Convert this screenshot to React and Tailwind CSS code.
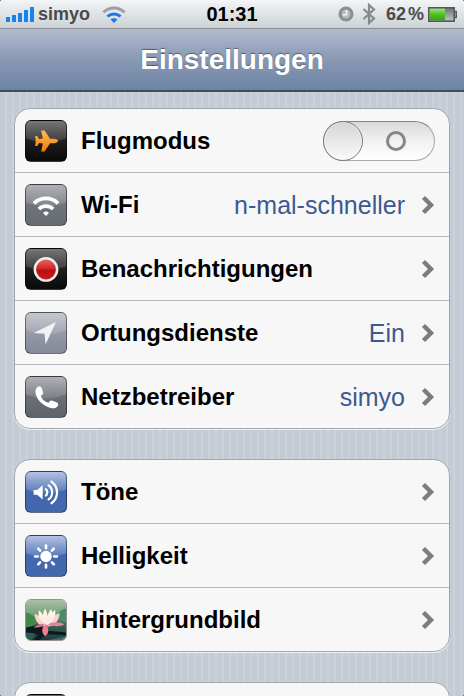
import React, { useState } from 'react';

const PlaneIcon = () => (
  <svg viewBox="0 0 42 42" className="size-full" aria-hidden="true">
    <defs>
      <linearGradient id="plane" x1="0" y1="0" x2="0" y2="1">
        <stop offset="0" stopColor="#ffbe55" />
        <stop offset="1" stopColor="#f5780c" />
      </linearGradient>
    </defs>
    <path
      fill="url(#plane)"
      d="M33.500 21c0 1.300-2 2.300-4 2.300h-4.200L19.500 32h-3.600l1.800-8.400-4-.4-1.900 3.100H9.600L10.200 21l-.6-5.300h2.200l1.900 3.100 4-.4L15.900 10h3.600l5.800 8.700h4.200c2 0 4 1 4 2.300z"
    />
  </svg>
);

const WifiIcon = () => (
  <svg viewBox="0 0 42 42" className="size-full" fill="none" stroke="#fff" strokeWidth="4" aria-hidden="true">
    <path d="M8.300 19.300a18 18 0 0 1 25.400 0" />
    <path d="M13.500 25.200a10.600 10.600 0 0 1 15 0" />
    <path d="M21 32.500l-3.100-3.200a4.500 4.500 0 0 1 6.200 0z" fill="#fff" stroke="none" />
  </svg>
);

const RecordIcon = () => (
  <svg viewBox="0 0 42 42" className="size-full" aria-hidden="true">
    <defs>
      <linearGradient id="record" x1="0" y1="0" x2="0" y2="1">
        <stop offset="0" stopColor="#e4645f" />
        <stop offset="0.450" stopColor="#cf2a28" />
        <stop offset="0.550" stopColor="#bd0f10" />
        <stop offset="1" stopColor="#c81c1c" />
      </linearGradient>
    </defs>
    <circle cx="21" cy="21.500" r="13" fill="#efefef" />
    <circle cx="21" cy="21.500" r="10.400" fill="url(#record)" />
  </svg>
);

const LocationIcon = () => (
  <svg viewBox="0 0 42 42" className="size-full" aria-hidden="true">
    <path d="M31.500 9.500L20.500 33l-1-11.500L8 21z" fill="#f3f3f6" />
  </svg>
);

const PhoneIcon = () => (
  <svg viewBox="0 0 42 42" className="size-full" aria-hidden="true">
    <path
      fill="#fff"
      d="M12.300 10.400c1.800-1.200 3.600-.5 4.300 1.500l1.300 3.800c.5 1.500 0 2.600-1.300 3.300l-1.100.7c1.200 3.600 4.200 6.400 8 7.400l.9-1.100c.9-1.200 2-1.500 3.400-1l4.100 1.400c1.900.7 2.500 2.300 1.400 4-1.300 2-3.600 2.800-6.400 2.300C17.600 30.900 10.300 23.500 9.900 15.600c-.1-2.300.8-4.200 2.400-5.200z"
    />
  </svg>
);

const SoundIcon = () => (
  <svg viewBox="0 0 42 42" className="size-full" fill="none" stroke="#fff" strokeLinecap="round" aria-hidden="true">
    <path d="M8 19h3.700l5.800-5v14.800l-5.800-5H8z" fill="#fff" stroke="none" />
    <path d="M20.800 18a4.500 4.500 0 0 1 0 6.800" strokeWidth="2.300" />
    <path d="M23.700 14a9.200 9.200 0 0 1 0 14.800" strokeWidth="2.300" />
    <path d="M26.700 10a14 14 0 0 1 0 22.800" strokeWidth="2.300" />
  </svg>
);

const SunIcon = () => (
  <svg viewBox="0 0 42 42" className="size-full" stroke="#fff" strokeWidth="2.800" strokeLinecap="round" aria-hidden="true">
    <circle cx="21" cy="21.500" r="6" fill="#fff" stroke="none" />
    <path d="M21 10v2.800M21 30.200v2.800M9.500 21.500h2.800M29.700 21.500h2.800M12.900 13.400l1.900 1.900M27.200 27.700l1.900 1.900M29.100 13.400l-1.900 1.900M14.800 27.700l-1.900 1.900" />
  </svg>
);

const LotusIcon = () => (
  <svg viewBox="0 0 42 42" className="size-full" aria-hidden="true">
    <defs>
      <linearGradient id="pond" x1="0" y1="0" x2="0" y2="1">
        <stop offset="0" stopColor="#a9bfa6" />
        <stop offset="0.300" stopColor="#7ca781" />
        <stop offset="0.600" stopColor="#376a50" />
        <stop offset="1" stopColor="#1e3a3c" />
      </linearGradient>
      <linearGradient id="petal" x1="0" y1="0" x2="0" y2="1">
        <stop offset="0" stopColor="#fffbee" />
        <stop offset="0.600" stopColor="#fdebe2" />
        <stop offset="1" stopColor="#f08e9c" />
      </linearGradient>
    </defs>
    <rect width="42" height="42" fill="url(#pond)" />
    <path d="M0 13c5 1 9 5 13 11L0 31z" fill="#3f8a4b" />
    <path d="M42 9c-5 1-9 5-12 10l12 5z" fill="#4d8a6b" />
    <path d="M0 29l14-3 7 6 21 2v3l-20-1-8 6H8l5-6-13 2z" fill="#0c1a20" />
    <path d="M24 42l18-4v4z" fill="#3f6a73" />
    <path d="M0 34l10 1-4 7H0z" fill="#2b5a50" />
    <path d="M21 28C13 28 9 21 9 14.500c5 1 9 6 12 13.500zM22 28c8 0 13-7 13.500-14-6 1-10 7-13.500 14z" fill="#fad0cf" />
    <path d="M21 28c-6-4-9-11-7.500-17 4 2 7 9 7.500 17zM23 28c6-4 9-12 7.500-17.500-4 2-7 9.500-7.500 17.500z" fill="url(#petal)" />
    <path d="M21 28c-4-6-4-14-1-19 3 5 4 13 1 19zM23 28c-2-6-1-14 3.500-18.500 2 5 1 13-3.500 18.500z" fill="url(#petal)" />
    <path d="M14 18q8 3 16 0l-5 8h-6z" fill="#fdebe2" />
    <path d="M23 25.500c5-3 13-3 17.500 0-3 2.500-12 3-17.500 0z" fill="#e3849a" />
    <path d="M20 25c-4 0-8 1-12 3.500 5 1 9 0 12-3.500z" fill="#e26c83" />
    <path d="M20.500 25.500c-4.500 4-4.500 9-.5 12.500 4.500-3 4.500-8 .5-12.500z" fill="#f27c90" />
  </svg>
);

const groups = [
  {
    id: 'network',
    items: [
      { label: 'Flugmodus', Icon: PlaneIcon, tile: 'from-[#606060] via-[#1f1f1f] to-[#0a0a0a]', toggle: true },
      { label: 'Wi-Fi', Icon: WifiIcon, tile: 'from-[#a3a5a9] via-[#70747b] to-[#666a71]', value: 'n-mal-schneller' },
      { label: 'Benachrichtigungen', Icon: RecordIcon, tile: 'from-[#606060] via-[#1f1f1f] to-[#0a0a0a]' },
      { label: 'Ortungsdienste', Icon: LocationIcon, tile: 'from-[#bdbfc8] via-[#9699a7] to-[#858998]', value: 'Ein' },
      { label: 'Netzbetreiber', Icon: PhoneIcon, tile: 'from-[#a3a5a9] via-[#6b6f76] to-[#5e6269]', value: 'simyo' },
    ],
  },
  {
    id: 'device',
    items: [
      { label: 'Töne', Icon: SoundIcon, tile: 'from-[#a6b8dd] via-[#4167ae] to-[#4468ac]' },
      { label: 'Helligkeit', Icon: SunIcon, tile: 'from-[#a6b8dd] via-[#4167ae] to-[#4468ac]' },
      { label: 'Hintergrundbild', Icon: LotusIcon, photo: true },
    ],
  },
];

const Tile = ({ Icon, tile, photo }) => (
  <span
    className={`relative block size-[42px] shrink-0 overflow-hidden rounded-md border border-black/40 ${
      photo ? '' : `bg-linear-to-b ${tile}`
    }`}
  >
    {!photo && (
      <svg viewBox="0 0 42 42" className="absolute inset-0 size-full" aria-hidden="true">
        <path d="M0 0h42v18q-21 9-42 0z" fill="#fff" fillOpacity="0.140" />
      </svg>
    )}
    <span className="absolute inset-0">
      <Icon />
    </span>
  </span>
);

const Chevron = () => (
  <svg viewBox="0 0 14 20" className="h-5 w-3.5 shrink-0" fill="none" stroke="#7c7c7c" strokeWidth="4.400" aria-hidden="true">
    <path d="M2.500 2.500L10 10l-7.500 7.500" />
  </svg>
);

const Toggle = ({ id }) => {
  const [on, setOn] = useState(false);

  return (
    <span className="relative block h-10 w-28 shrink-0 rounded-full border border-[#a9a9a9] border-t-[#858585] bg-linear-to-b from-[#d9d9d9] via-[#f1f1f1] to-white">
      <input
        id={id}
        type="checkbox"
        role="switch"
        checked={on}
        onChange={(e) => setOn(e.target.checked)}
        className="absolute inset-0 z-10 size-full cursor-pointer appearance-none rounded-full"
      />
      <span
        className={`absolute -top-px size-10 rounded-full border border-[#7d7d7d] bg-linear-to-b from-[#d4d4d4] to-[#fbfbfb] inset-shadow-[0_0_2px_#fff] ${
          on ? '-right-px' : '-left-px'
        }`}
      />
      <span className={`absolute top-[9px] size-5 rounded-full border-3 border-[#868686] ${on ? 'left-7' : 'right-7'}`} />
    </span>
  );
};

const rowClass = 'flex h-[63px] w-full items-center pr-3.5 pl-2.5 text-left';

const Row = ({ item }) => {
  const { label, value, toggle } = item;

  if (toggle) {
    return (
      <div className={rowClass}>
        <Tile {...item} />
        <label htmlFor="airplane" className="ml-3.5 flex-1 text-2xl font-bold text-black">
          {label}
        </label>
        <Toggle id="airplane" />
      </div>
    );
  }

  return (
    <button type="button" className={rowClass}>
      <Tile {...item} />
      <span className="ml-3.5 flex-1 text-2xl font-bold whitespace-nowrap text-black">{label}</span>
      {value && <span className="mr-4 text-[25px] leading-8 whitespace-nowrap text-[#3c5a92]">{value}</span>}
      <Chevron />
    </button>
  );
};

const cardClass =
  'overflow-hidden rounded-2xl border border-[#a2a7ae] bg-[#f7f7f7] shadow-[0_1px_0_#eef1f5]';

const StatusBar = () => (
  <div className="flex h-7 shrink-0 items-center justify-between bg-linear-to-b from-[#f3f5f6] to-[#ccd2d6] px-1.5 text-lg font-bold text-[#4a4a4a]">
    <div className="flex flex-1 items-center">
      <svg viewBox="0 0 28 15" className="mr-1 h-[15px] w-7" fill="#1683f2" aria-hidden="true">
        <path d="M0 10h4v5H0zM6 8h4v7H6zM12 6h4v9h-4zM18 3h4v12h-4zM24 0h4v15h-4z" />
      </svg>
      <span>simyo</span>
      <svg viewBox="0 0 24 17" className="ml-3 h-[17px] w-6" fill="none" strokeWidth="3" aria-hidden="true">
        <path d="M1.500 6.200a15 15 0 0 1 21 0" stroke="#9a9fa3" />
        <path d="M5.500 10.500a9.400 9.400 0 0 1 13 0" stroke="#1978ee" />
        <path d="M12 17l-3.500-3.400a5 5 0 0 1 7 0z" fill="#1978ee" />
      </svg>
    </div>
    <span className="text-xl text-black">01:31</span>
    <div className="flex flex-1 items-center justify-end">
      <svg viewBox="0 0 16 16" className="size-4" aria-hidden="true">
        <circle cx="8" cy="8" r="7.500" fill="#87908e" />
        <circle cx="8" cy="8" r="4.500" fill="#b4bbba" />
        <path d="M8.500 4v4.700H5" fill="none" stroke="#f4f6f6" strokeWidth="1.600" />
      </svg>
      <svg viewBox="0 0 14 22" className="ml-2 h-[22px] w-3.5" fill="none" stroke="#858a8c" strokeWidth="2.200" aria-hidden="true">
        <path d="M1.500 6l10.500 9.500L7 20V2l5 4.500L1.500 16" />
      </svg>
      <span className="ml-2.5 flex gap-0.5">
        <span>62</span>
        <span>%</span>
      </span>
      <svg viewBox="0 0 30 15" className="ml-1 h-[15px] w-[30px]" aria-hidden="true">
        <defs>
          <linearGradient id="charge" x1="0" y1="0" x2="0" y2="1">
            <stop offset="0" stopColor="#9ae37a" />
            <stop offset="0.500" stopColor="#4fc220" />
            <stop offset="1" stopColor="#3f9c1a" />
          </linearGradient>
          <linearGradient id="drained" x1="0" y1="0" x2="0" y2="1">
            <stop offset="0" stopColor="#6f7073" />
            <stop offset="1" stopColor="#c3c5c8" />
          </linearGradient>
        </defs>
        <rect x="0.800" y="0.800" width="25.400" height="13.400" fill="url(#drained)" stroke="#55595c" strokeWidth="1.600" />
        <rect x="1.600" y="1.600" width="15.400" height="11.800" fill="url(#charge)" />
        <path d="M27 4.500h1.200v6H27" fill="none" stroke="#55595c" strokeWidth="1.600" />
      </svg>
    </div>
  </div>
);

const App = () => {
  return (
    <div className="h-screen bg-black font-['Liberation_Sans',Arial,sans-serif]">
      <div className="flex h-full flex-col overflow-hidden rounded-xs bg-[#c5ccd4]">
        <StatusBar />
        <header className="flex h-16 shrink-0 items-center justify-center border-t border-b-2 border-t-[#8b8f95] border-b-[#3f4d66] bg-linear-to-b from-[#b3bccd] via-[#8899b3] to-[#6d84a5]">
          <h1 className="text-[28px] leading-8 font-bold text-white [text-shadow:0_-1px_1px_rgba(50,65,90,0.7)]">
            Einstellungen
          </h1>
        </header>
        <main className="flex flex-1 flex-col gap-[30px] overflow-hidden bg-[repeating-linear-gradient(90deg,#c4cbd5_0_5px,#cbd2da_5px_7px)] px-3.5 pt-4">
          {groups.map((group) => (
            <ul key={group.id} className={`shrink-0 divide-y divide-[#b4b7bb] ${cardClass}`}>
              {group.items.map((item) => (
                <li key={item.label}>
                  <Row item={item} />
                </li>
              ))}
            </ul>
          ))}
          <div className={`shrink-0 ${cardClass}`}>
            <div className={rowClass}>
              <span className="size-[42px] rounded-md border border-black/40 bg-linear-to-b from-[#6b6b6b] to-[#050505]" />
            </div>
          </div>
        </main>
      </div>
    </div>
  );
};

export default App;
